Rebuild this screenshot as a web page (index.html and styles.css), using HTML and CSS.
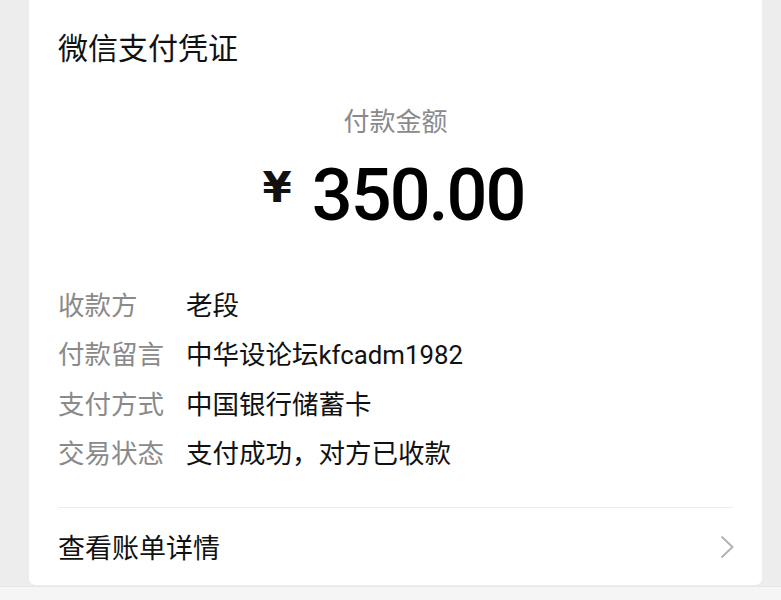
FILE: index.html
```html
<!DOCTYPE html>
<html lang="zh-CN">
<head>
<meta charset="utf-8">
<title>微信支付凭证</title>
<link rel="stylesheet" href="styles.css">
</head>
<body>
<div class="page">
  <div class="card">
    <div class="title">微信支付凭证</div>
    <div class="amount-label">付款金额</div>
    <div class="amount">
      <span class="currency">¥</span>
      <span class="value">350.00</span>
    </div>
    <div class="rows">
      <div class="row"><span class="label">收款方</span><span class="val">老段</span></div>
      <div class="row"><span class="label">付款留言</span><span class="val">中华设论坛<span class="latin">kfcadm1982</span></span></div>
      <div class="row"><span class="label">支付方式</span><span class="val">中国银行储蓄卡</span></div>
      <div class="row"><span class="label">交易状态</span><span class="val">支付成功，对方已收款</span></div>
    </div>
    <div class="link">
      <span class="link-text">查看账单详情</span>
      <svg class="chevron" width="14" height="24" viewBox="0 0 14 24"><polyline points="1.5,1.5 12.5,12 1.5,22.5" fill="none" stroke="#b3b3b3" stroke-width="2"/></svg>
    </div>
  </div>
  <div class="footer"></div>
</div>
</body>
</html>
```

FILE: styles.css
```css
html, body {
  margin: 0;
  padding: 0;
  background: #ededed;
}
body {
  font-family: Roboto, "Noto Sans CJK SC", sans-serif;
  color: #111;
  width: 781px;
  height: 600px;
  overflow: hidden;
}
.page {
  display: flex;
  flex-direction: column;
}
.card {
  margin-left: 29px;
  width: 733px;
  height: 585px;
  box-sizing: border-box;
  background: #fff;
  border-radius: 0 0 7px 7px;
  padding: 26px 29px 0;
  display: flex;
  flex-direction: column;
}
.title {
  font-family: "Noto Sans CJK SC", sans-serif;
  font-size: 30px;
  line-height: 40px;
  height: 40px;
  color: #111;
}
.amount-label {
  margin-top: 36px;
  font-family: "Noto Sans CJK SC", sans-serif;
  font-size: 26px;
  line-height: 36px;
  color: #8a8a8a;
  text-align: center;
}
.amount {
  margin-top: 18px;
  height: 80px;
  display: flex;
  justify-content: center;
  align-items: center;
  gap: 20px;
  padding-right: 4px;
}
.currency {
  font-family: "DejaVu Sans", sans-serif;
  font-weight: 700;
  font-size: 42px;
  line-height: 44px;
  margin-bottom: 16px;
}
.value {
  font-family: Roboto, sans-serif;
  font-weight: 500;
  font-size: 72px;
  letter-spacing: -2px;
  line-height: 80px;
  color: #000;
}
.rows {
  margin-top: 45px;
  display: flex;
  flex-direction: column;
}
.row {
  display: flex;
  height: 49.3px;
  line-height: 49px;
  font-size: 26.5px;
  font-family: Roboto, "Noto Sans CJK SC", sans-serif;
}
.label {
  width: 128px;
  flex: none;
  color: #8a8a8a;
}
.val {
  color: #111;
}
.latin {
  font-size: 25.8px;
}
.link {
  margin-top: 29px;
  border-top: 1px solid #ececec;
  height: 78px;
  display: flex;
  align-items: center;
  justify-content: space-between;
}
.link-text {
  font-family: "Noto Sans CJK SC", sans-serif;
  font-size: 27px;
  color: #111;
}
.chevron {
  margin-right: -1px;
  flex: none;
}
.footer {
  margin-top: 1px;
  height: 14px;
  background: #f5f5f5;
  border-top: 1px solid #e6e6e6;
}
```
